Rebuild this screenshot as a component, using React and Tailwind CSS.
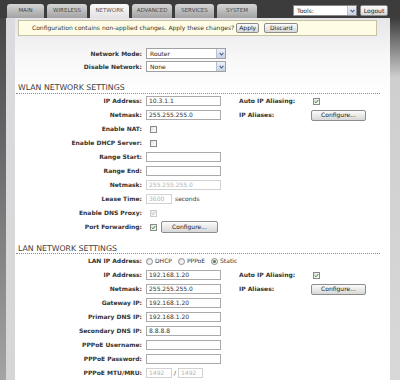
import React from 'react'

const tabs = [
  { name: 'MAIN', w: 'w-[37px]' },
  { name: 'WIRELESS', w: 'w-[40px]' },
  { name: 'NETWORK', w: 'w-[39px]', active: true },
  { name: 'ADVANCED', w: 'w-[40px]' },
  { name: 'SERVICES', w: 'w-[39px]' },
  { name: 'SYSTEM', w: 'w-[40px]' },
]

const Arrow = () => (
  <span className="h-full w-[9px] flex items-center justify-center bg-gradient-to-b from-[#eef2fa] to-[#c6d2e6] border-l border-[#b4c0d4]">
    <svg width="5" height="4" viewBox="0 0 5 4">
      <path d="M0.6 0.8 L2.5 3 L4.4 0.8" stroke="#4b5d80" strokeWidth="1.1" fill="none" />
    </svg>
  </span>
)

const Select = ({ value, w }) => (
  <div className={`flex items-center h-[11px] border border-[#a0a0a0] bg-white ${w}`}>
    <span className="flex-1 pl-[3px] text-[6px] leading-none text-[#222]">{value}</span>
    <Arrow />
  </div>
)

const Input = ({ value, disabled, w = 'w-[75px]' }) => (
  <div
    className={`h-[10px] border bg-white pl-[2px] text-[6px] leading-[8px] ${w} ${
      disabled ? 'border-[#d2d2d2] text-[#b4b4b4]' : 'border-[#aaaaaa] text-[#333]'
    }`}
  >
    {value}
  </div>
)

const Check = ({ checked, disabled, className = 'ml-[4px]' }) => (
  <div
    className={`w-[7px] h-[7px] border flex items-center justify-center bg-gradient-to-br from-[#e2e2e2] to-white ${className} ${
      disabled ? 'border-[#cccccc]' : 'border-[#8a8a8a]'
    }`}
  >
    {checked && (
      <svg width="5" height="5" viewBox="0 0 5 5">
        <path d="M0.7 2.5 L2 3.8 L4.3 1" stroke={disabled ? '#c4c4c4' : '#2e8b2e'} strokeWidth="1" fill="none" />
      </svg>
    )}
  </div>
)

const Radio = ({ checked, label }) => (
  <div className="flex items-center gap-[2px] mr-[6px]">
    <div className="w-[7px] h-[7px] rounded-full border border-[#8a8a8a] bg-gradient-to-br from-[#e0e0e0] to-white flex items-center justify-center">
      {checked && <div className="w-[3px] h-[3px] rounded-full bg-[#4f7a4f]" />}
    </div>
    <span className="text-[6px] leading-none text-[#333]">{label}</span>
  </div>
)

const Button = ({ children, className }) => (
  <div
    className={`flex items-center justify-center border border-[#8c8c8c] rounded-[2px] bg-gradient-to-b from-[#fbfbfb] to-[#d8d8d8] text-[6px] leading-none text-[#222] ${className}`}
  >
    {children}
  </div>
)

const Row = ({ label, children, rLabel, rControl, h = 'h-[14px]' }) => (
  <div className={`flex items-center ${h}`}>
    <div className="w-[127px] text-right font-bold text-[6px] leading-none text-[#333]">{label}</div>
    <div className="ml-[4px] w-[93px] flex items-center">{children}</div>
    {rLabel && <div className="w-[70px] font-bold text-[6px] leading-none text-[#333]">{rLabel}</div>}
    {rControl}
  </div>
)

const Heading = ({ title, className }) => (
  <div className={`ml-[1px] mr-[10px] border-b border-dotted border-[#8c8c8c] pl-[2px] text-[7.8px] leading-[7px] text-[#3c3c3c] ${className}`}>
    {title}
  </div>
)

export default function App() {
  return (
    <div className="w-[400px] h-[380px] overflow-hidden bg-[#3c3c3c] flex flex-col font-['DejaVu_Sans',sans-serif]">
      <div className="h-[18px] flex items-end pl-[7px]">
        <div className="flex items-end gap-[3px]">
          {tabs.map((t) => (
            <div
              key={t.name}
              className={`h-[14px] rounded-t-[3px] flex items-center justify-center text-[5.5px] leading-none ${t.w} ${
                t.active
                  ? 'bg-gradient-to-b from-[#fafafa] to-[#e2e2e2] text-[#555]'
                  : 'bg-gradient-to-b from-[#d6d6d6] to-[#a2a2a2] text-[#474747]'
              }`}
            >
              {t.name}
            </div>
          ))}
        </div>
        <div className="ml-auto mr-[12px] self-start mt-[5px] flex items-center gap-[3px]">
          <div className="w-[64px] h-[11px] flex items-center bg-white border border-[#888]">
            <span className="flex-1 pl-[3px] text-[6px] leading-none text-[#222]">Tools:</span>
            <Arrow />
          </div>
          <Button className="w-[28px] h-[11px] rounded-[1px]">Logout</Button>
        </div>
      </div>

      <div className="flex flex-1">
        <div className="w-[6px] bg-[linear-gradient(to_bottom,#464646,#a4a4a4)]" />
        <div className="w-[9px] bg-[linear-gradient(to_bottom,#dcdce0,#d6d6d6)]" />
        <div className="w-[375px] flex flex-col bg-[linear-gradient(to_bottom,#e6e6ea,#f8f8f8_40px,#ffffff_80px)]">
          <div className="mt-[2px] ml-[3px] mr-[13px] h-[16px] border border-[#c6c2a2] bg-[#fefce4] flex items-center pl-[13px]">
            <span className="text-[6px] leading-none text-[#333]">
              Configuration contains non-applied changes. Apply these changes?
            </span>
            <Button className="ml-[2px] w-[23px] h-[10px]">Apply</Button>
            <Button className="ml-[5px] w-[34px] h-[10px]">Discard</Button>
          </div>

          <div className="mt-[11px]">
            <Row label="Network Mode:" h="h-[13px]">
              <Select value="Router" w="w-[80px]" />
            </Row>
            <Row label="Disable Network:" h="h-[13px]">
              <Select value="None" w="w-[80px]" />
            </Row>
          </div>

          <Heading title="WLAN NETWORK SETTINGS" className="mt-[11px] pb-[2px]" />
          <Row
            label="IP Address:"
            rLabel="Auto IP Aliasing:"
            rControl={<Check checked className="ml-[4px]" />}
          >
            <Input value="10.3.1.1" />
          </Row>
          <Row
            label="Netmask:"
            rLabel="IP Aliases:"
            rControl={<Button className="ml-[2px] w-[55px] h-[11px]">Configure...</Button>}
          >
            <Input value="255.255.255.0" />
          </Row>
          <Row label="Enable NAT:">
            <Check />
          </Row>
          <Row label="Enable DHCP Server:">
            <Check />
          </Row>
          <Row label="Range Start:">
            <Input value="" />
          </Row>
          <Row label="Range End:">
            <Input value="" />
          </Row>
          <Row label="Netmask:">
            <Input value="255.255.255.0" disabled />
          </Row>
          <Row label="Lease Time:">
            <Input value="3600" disabled w="w-[26px]" />
            <span className="ml-[3px] text-[6px] leading-none text-[#333]">seconds</span>
          </Row>
          <Row label="Enable DNS Proxy:">
            <Check checked disabled />
          </Row>
          <Row label="Port Forwarding:">
            <Check checked />
            <Button className="ml-[4px] w-[57px] h-[12px]">Configure...</Button>
          </Row>

          <Heading title="LAN NETWORK SETTINGS" className="mt-[11px] pb-[1px]" />
          <Row label="LAN IP Address:">
            <div className="flex items-center whitespace-nowrap">
              <Radio label="DHCP" />
              <Radio label="PPPoE" />
              <Radio label="Static" checked />
            </div>
          </Row>
          <Row
            label="IP Address:"
            rLabel="Auto IP Aliasing:"
            rControl={<Check checked className="ml-[4px]" />}
          >
            <Input value="192.168.1.20" />
          </Row>
          <Row
            label="Netmask:"
            rLabel="IP Aliases:"
            rControl={<Button className="ml-[2px] w-[55px] h-[11px]">Configure...</Button>}
          >
            <Input value="255.255.255.0" />
          </Row>
          <Row label="Gateway IP:">
            <Input value="192.168.1.20" />
          </Row>
          <Row label="Primary DNS IP:">
            <Input value="192.168.1.20" />
          </Row>
          <Row label="Secondary DNS IP:">
            <Input value="8.8.8.8" />
          </Row>
          <Row label="PPPoE Username:">
            <Input value="" />
          </Row>
          <Row label="PPPoE Password:">
            <Input value="" />
          </Row>
          <Row label="PPPoE MTU/MRU:">
            <Input value="1492" disabled w="w-[26px]" />
            <span className="mx-[2px] text-[6px] leading-none text-[#333]">/</span>
            <Input value="1492" disabled w="w-[25px]" />
          </Row>
        </div>
        <div className="w-[10px] bg-[linear-gradient(to_bottom,#3c3c3c,#cfcfcf_60px,#d8d8d8)]" />
      </div>
    </div>
  )
}
